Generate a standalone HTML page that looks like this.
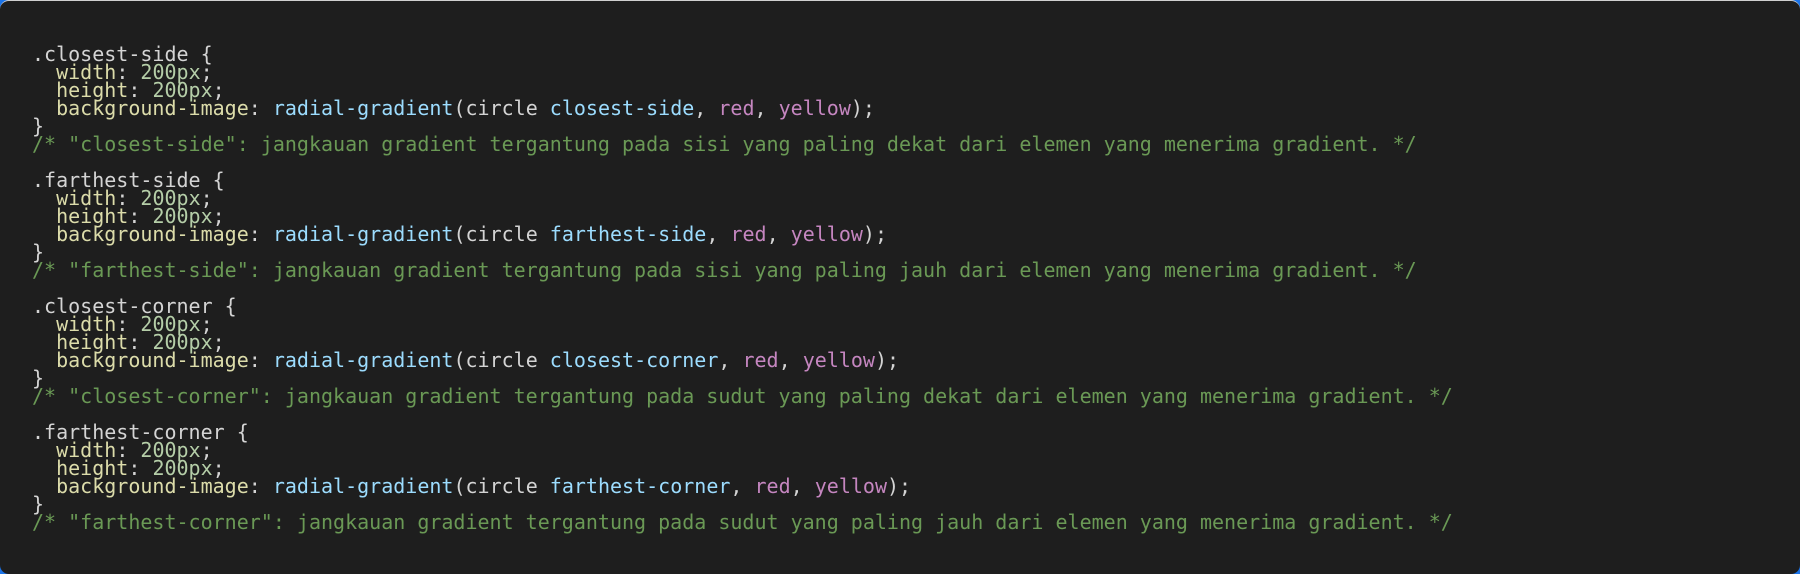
<!DOCTYPE html>
<html><head><meta charset="utf-8"><style>
html,body{margin:0;padding:0;width:1800px;height:574px;overflow:hidden;background:#1a73e8;}
.box{position:absolute;left:0;top:0;width:1800px;height:574px;background:#1e1e1e;border-radius:9px;border-top:1px solid #d0d0d0;box-sizing:border-box;}
pre{margin:0;position:absolute;left:32px;font-family:"DejaVu Sans Mono","Liberation Mono",monospace;font-size:20px;line-height:18.1px;color:#d4d4d4;white-space:pre;}
.p{color:#dcdcaa}.v{color:#b5cea8}.f{color:#9cdcfe}.k{color:#c586c0}.c{color:#6a9955}
</style></head><body><div class="box">
<pre style="top:43.5px">.closest-side {
  <span class="p">width</span>: <span class="v">200px</span>;
  <span class="p">height</span>: <span class="v">200px</span>;
  <span class="p">background-image</span>: <span class="f">radial-gradient</span>(circle <span class="f">closest-side</span>, <span class="k">red</span>, <span class="k">yellow</span>);
}
<span class="c">/* "closest-side": jangkauan gradient tergantung pada sisi yang paling dekat dari elemen yang menerima gradient. */</span></pre>
<pre style="top:169.5px">.farthest-side {
  <span class="p">width</span>: <span class="v">200px</span>;
  <span class="p">height</span>: <span class="v">200px</span>;
  <span class="p">background-image</span>: <span class="f">radial-gradient</span>(circle <span class="f">farthest-side</span>, <span class="k">red</span>, <span class="k">yellow</span>);
}
<span class="c">/* "farthest-side": jangkauan gradient tergantung pada sisi yang paling jauh dari elemen yang menerima gradient. */</span></pre>
<pre style="top:295.5px">.closest-corner {
  <span class="p">width</span>: <span class="v">200px</span>;
  <span class="p">height</span>: <span class="v">200px</span>;
  <span class="p">background-image</span>: <span class="f">radial-gradient</span>(circle <span class="f">closest-corner</span>, <span class="k">red</span>, <span class="k">yellow</span>);
}
<span class="c">/* "closest-corner": jangkauan gradient tergantung pada sudut yang paling dekat dari elemen yang menerima gradient. */</span></pre>
<pre style="top:421.5px">.farthest-corner {
  <span class="p">width</span>: <span class="v">200px</span>;
  <span class="p">height</span>: <span class="v">200px</span>;
  <span class="p">background-image</span>: <span class="f">radial-gradient</span>(circle <span class="f">farthest-corner</span>, <span class="k">red</span>, <span class="k">yellow</span>);
}
<span class="c">/* "farthest-corner": jangkauan gradient tergantung pada sudut yang paling jauh dari elemen yang menerima gradient. */</span></pre>
</div></body></html>
